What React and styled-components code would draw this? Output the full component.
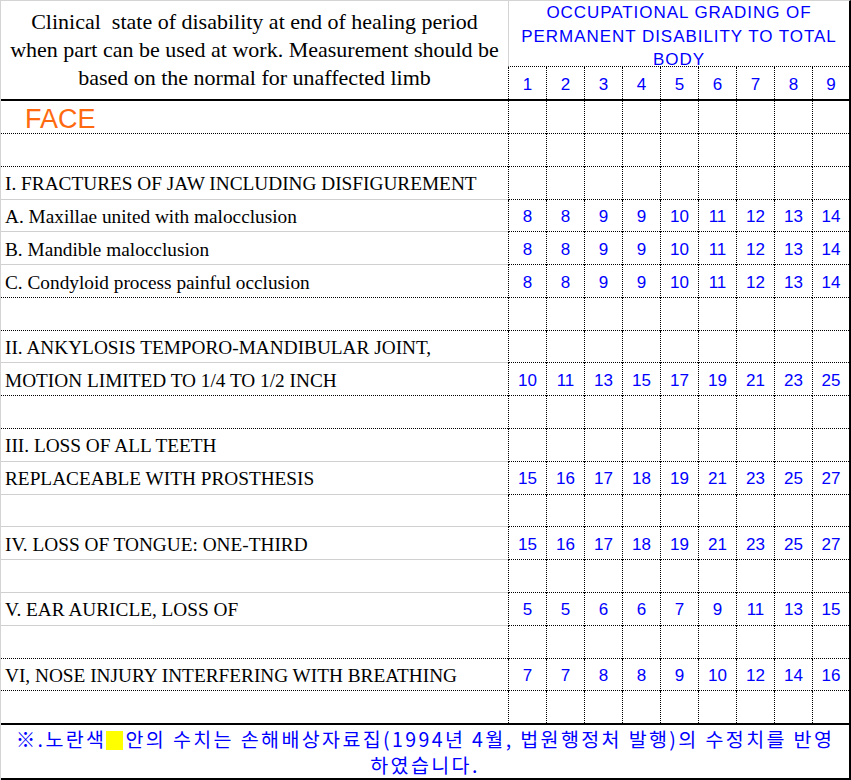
import React from 'react';
import styled, { createGlobalStyle } from 'styled-components';

const GlobalStyle = createGlobalStyle`
  html, body {
    margin: 0;
    padding: 0;
    background: #ffffff;
  }
`;

const Sheet = styled.div`
  width: 851px;
  height: 780px;
  box-sizing: border-box;
  border-top: 1px solid #d4d4d4;
  border-left: 1px solid #d4d4d4;
  border-right: 2px solid #000;
  display: flex;
  flex-direction: column;
  overflow: hidden;
`;

const Header = styled.div`
  display: flex;
  height: 98px;
  border-bottom: 2px solid #000;
`;

const Caption = styled.div`
  width: 507px;
  display: flex;
  align-items: center;
  justify-content: center;
  font-family: "Liberation Serif", "Times New Roman", serif;
  font-size: 22px;
  line-height: 28px;
  color: #000;
  text-align: center;
  white-space: pre;
`;

const GradeHead = styled.div`
  flex: 1;
  display: flex;
  flex-direction: column;
`;

const GradeTitle = styled.div`
  height: 65px;
  border-left: 1px solid #d4d4d4;
  border-bottom: 1px dotted #000;
  font-family: "Liberation Sans", Arial, sans-serif;
  font-size: 17px;
  line-height: 23.5px;
  letter-spacing: 0.95px;
  color: #0000ff;
  text-align: center;
`;

const Row = styled.div`
  display: flex;
  height: ${p => p.$h || 33}px;
  box-sizing: border-box;
`;

const Label = styled.div`
  width: 507px;
  box-sizing: border-box;
  display: flex;
  align-items: center;
  padding: ${p => (p.$face ? '5px 0 0 24px' : '3px 0 0 4px')};
  border-bottom: ${p =>
    p.$last ? 'none' : p.$solid ? '1px solid #d0d0d0' : '1px dotted #000'};
  font-family: ${p =>
    p.$face ? '"Liberation Sans", Arial, sans-serif' : '"Liberation Serif", "Times New Roman", serif'};
  font-size: ${p => (p.$face ? 27 : 19.3)}px;
  color: ${p => (p.$face ? '#ff6a10' : '#000')};
  white-space: nowrap;
`;

const Cell = styled.div`
  width: ${p => (p.$end ? 37 : 38)}px;
  box-sizing: border-box;
  border-left: 1px dotted #000;
  border-bottom: ${p => (p.$last ? 'none' : '1px dotted #000')};
  display: flex;
  align-items: center;
  justify-content: center;
  padding-top: 3px;
  font-family: "Liberation Sans", Arial, sans-serif;
  font-size: 17px;
  color: #0000ff;
`;

const Footer = styled.div`
  flex: 1;
  border-top: 2px solid #000;
  border-bottom: 2px solid #000;
  padding-top: 1px;
  display: flex;
  flex-direction: column;
  font-family: "Noto Sans CJK KR", "Liberation Sans", sans-serif;
  font-size: 19.5px;
  letter-spacing: 2.4px;
  color: #0000ff;
  text-align: center;
`;

const FooterLine = styled.div`
  height: 26px;
  line-height: 26px;
  white-space: nowrap;
`;

const Marker = styled.span`
  display: inline-block;
  width: 17px;
  height: 19px;
  margin: 0 2px 0 0;
  vertical-align: -3px;
  background: #ffff00;
`;

const rows = [
  { text: 'FACE', face: true },
  { text: '' },
  { text: 'I. FRACTURES OF JAW INCLUDING DISFIGUREMENT', solid: true },
  { text: 'A. Maxillae united with malocclusion', solid: true, v: [8, 8, 9, 9, 10, 11, 12, 13, 14] },
  { text: 'B. Mandible malocclusion', solid: true, v: [8, 8, 9, 9, 10, 11, 12, 13, 14] },
  { text: 'C. Condyloid process painful occlusion', v: [8, 8, 9, 9, 10, 11, 12, 13, 14] },
  { text: '' },
  { text: 'II. ANKYLOSIS TEMPORO-MANDIBULAR JOINT,', solid: true },
  { text: 'MOTION LIMITED TO 1/4 TO 1/2 INCH', v: [10, 11, 13, 15, 17, 19, 21, 23, 25] },
  { text: '' },
  { text: 'III. LOSS OF ALL TEETH', solid: true },
  { text: 'REPLACEABLE WITH PROSTHESIS', solid: true, v: [15, 16, 17, 18, 19, 21, 23, 25, 27] },
  { text: '', solid: true },
  { text: 'IV. LOSS OF TONGUE: ONE-THIRD', solid: true, v: [15, 16, 17, 18, 19, 21, 23, 25, 27] },
  { text: '', solid: true },
  { text: 'V. EAR AURICLE, LOSS OF', solid: true, v: [5, 5, 6, 6, 7, 9, 11, 13, 15] },
  { text: '' },
  { text: 'VI, NOSE INJURY INTERFERING WITH BREATHING', v: [7, 7, 8, 8, 9, 10, 12, 14, 16] },
  { text: '', last: true },
];

const grades = [1, 2, 3, 4, 5, 6, 7, 8, 9];

const App = () => {
  return (
    <>
      <GlobalStyle />
      <Sheet>
        <Header>
          <Caption>
            {'Clinical  state of disability at end of healing period\nwhen part can be used at work. Measurement should be\nbased on the normal for unaffected limb'}
          </Caption>
          <GradeHead>
            <GradeTitle>
              OCCUPATIONAL GRADING OF
              <br />
              PERMANENT DISABILITY TO TOTAL
              <br />
              BODY
            </GradeTitle>
            <Row $h={32}>
              {grades.map((g, i) => (
                <Cell key={g} $end={i === 8} $last>
                  {g}
                </Cell>
              ))}
            </Row>
          </GradeHead>
        </Header>
        {rows.map((r, idx) => (
          <Row key={idx} $h={r.last ? 32 : 33}>
            <Label $face={r.face} $solid={r.solid} $last={r.last}>
              {r.text}
            </Label>
            {grades.map((g, i) => (
              <Cell key={g} $end={i === 8} $last={r.last}>
                {r.v ? r.v[i] : ''}
              </Cell>
            ))}
          </Row>
        ))}
        <Footer>
          <FooterLine>
            ※.노란색<Marker />안의 수치는 손해배상자료집(1994년 4월, 법원행정처 발행)의 수정치를 반영
          </FooterLine>
          <FooterLine>하였습니다.</FooterLine>
        </Footer>
      </Sheet>
    </>
  );
};

export default App;
